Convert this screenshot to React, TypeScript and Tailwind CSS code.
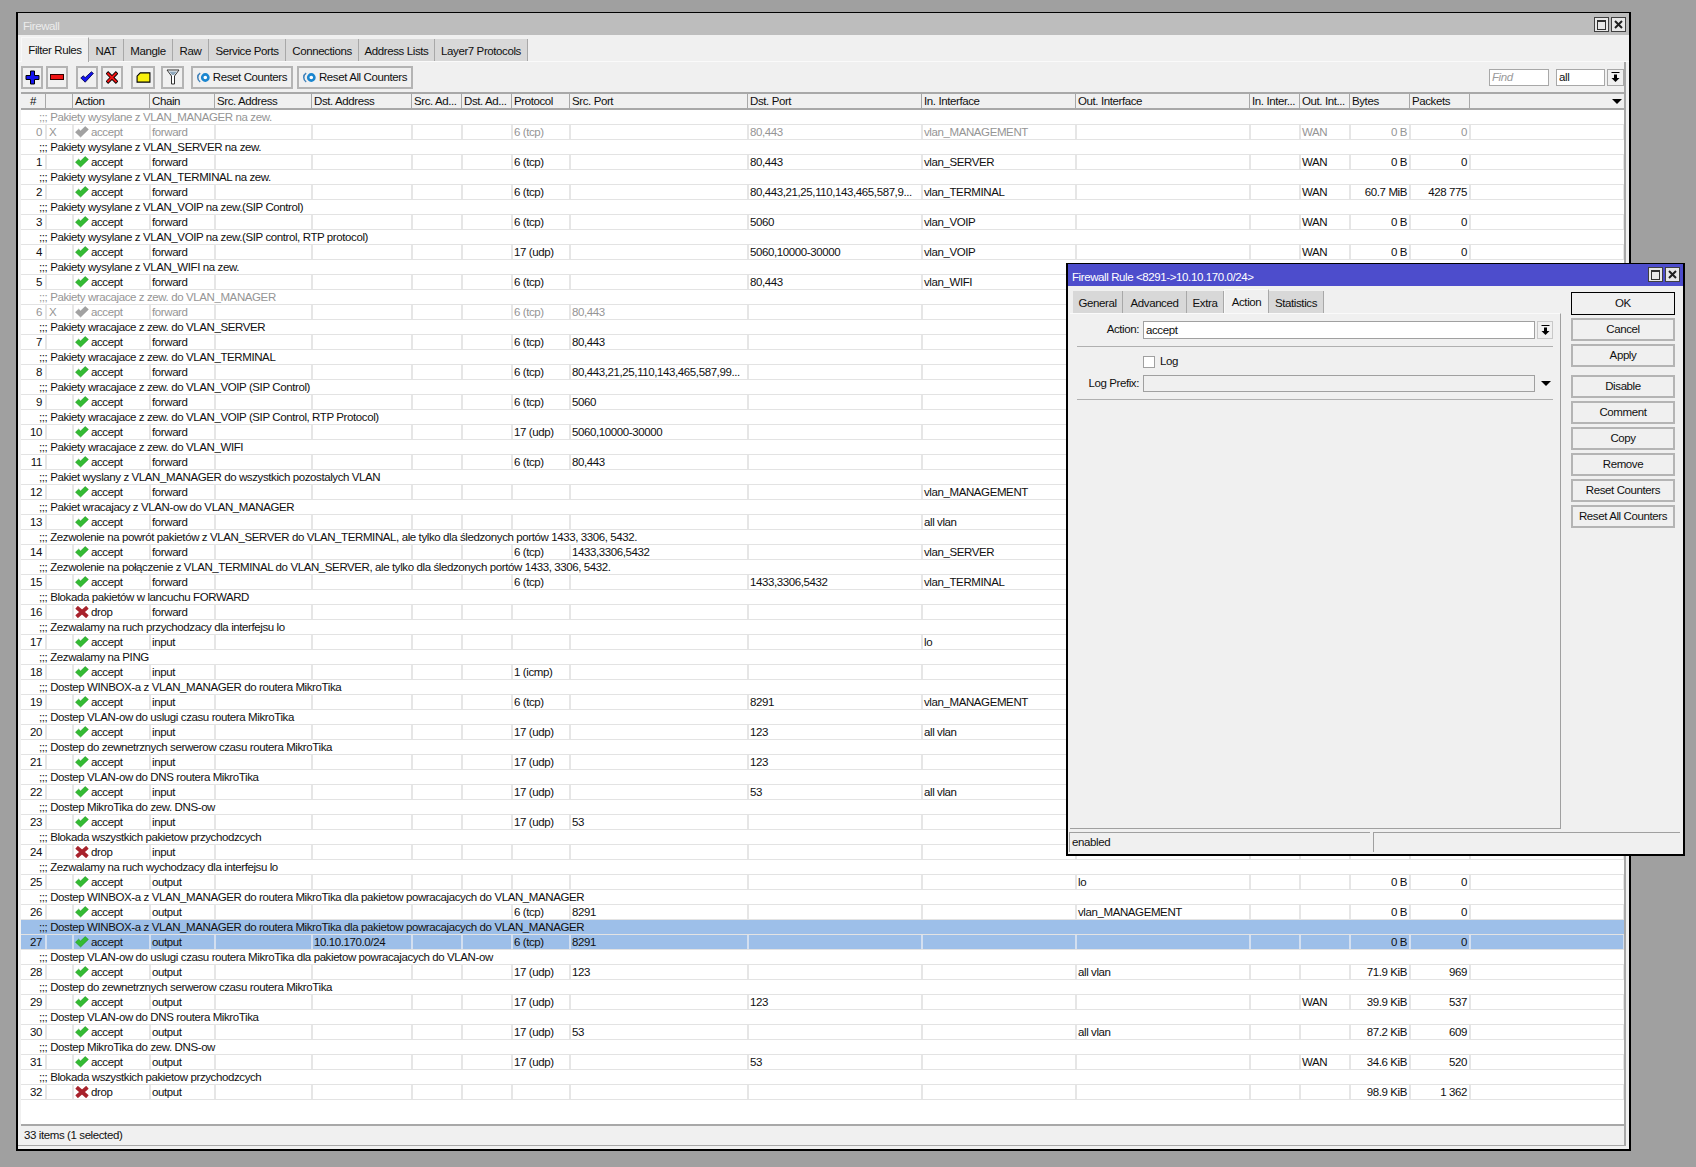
import React from "react";

type Row = {
  c: string;
  a?: "accept" | "drop";
  ch: string;
  dstA?: string;
  p?: string;
  sp?: string;
  dp?: string;
  ii?: string;
  oi?: string;
  oint?: string;
  b?: string;
  n?: string;
  off?: boolean;
  sel?: boolean;
};

const rows: Row[] = [
  { c: "Pakiety wysylane z VLAN_MANAGER na zew.", ch: "forward", p: "6 (tcp)", dp: "80,443", ii: "vlan_MANAGEMENT", oint: "WAN", b: "0 B", n: "0", off: true },
  { c: "Pakiety wysylane z VLAN_SERVER na zew.", ch: "forward", p: "6 (tcp)", dp: "80,443", ii: "vlan_SERVER", oint: "WAN", b: "0 B", n: "0" },
  { c: "Pakiety wysylane z VLAN_TERMINAL na zew.", ch: "forward", p: "6 (tcp)", dp: "80,443,21,25,110,143,465,587,9...", ii: "vlan_TERMINAL", oint: "WAN", b: "60.7 MiB", n: "428 775" },
  { c: "Pakiety wysylane z VLAN_VOIP na zew.(SIP Control)", ch: "forward", p: "6 (tcp)", dp: "5060", ii: "vlan_VOIP", oint: "WAN", b: "0 B", n: "0" },
  { c: "Pakiety wysylane z VLAN_VOIP na zew.(SIP control, RTP protocol)", ch: "forward", p: "17 (udp)", dp: "5060,10000-30000", ii: "vlan_VOIP", oint: "WAN", b: "0 B", n: "0" },
  { c: "Pakiety wysylane z VLAN_WIFI na zew.", ch: "forward", p: "6 (tcp)", dp: "80,443", ii: "vlan_WIFI" },
  { c: "Pakiety wracajace z zew. do VLAN_MANAGER", ch: "forward", p: "6 (tcp)", sp: "80,443", off: true },
  { c: "Pakiety wracajace z zew. do VLAN_SERVER", ch: "forward", p: "6 (tcp)", sp: "80,443" },
  { c: "Pakiety wracajace z zew. do VLAN_TERMINAL", ch: "forward", p: "6 (tcp)", sp: "80,443,21,25,110,143,465,587,99..." },
  { c: "Pakiety wracajace z zew. do VLAN_VOIP (SIP Control)", ch: "forward", p: "6 (tcp)", sp: "5060" },
  { c: "Pakiety wracajace z zew. do VLAN_VOIP (SIP Control, RTP Protocol)", ch: "forward", p: "17 (udp)", sp: "5060,10000-30000" },
  { c: "Pakiety wracajace z zew. do VLAN_WIFI", ch: "forward", p: "6 (tcp)", sp: "80,443" },
  { c: "Pakiet wyslany z VLAN_MANAGER do wszystkich pozostalych VLAN", ch: "forward", ii: "vlan_MANAGEMENT" },
  { c: "Pakiet wracajacy z VLAN-ow do VLAN_MANAGER", ch: "forward", ii: "all vlan" },
  { c: "Zezwolenie na powrót pakietów z VLAN_SERVER do VLAN_TERMINAL, ale tylko dla śledzonych portów 1433, 3306, 5432.", ch: "forward", p: "6 (tcp)", sp: "1433,3306,5432", ii: "vlan_SERVER" },
  { c: "Zezwolenie na połączenie z VLAN_TERMINAL do VLAN_SERVER, ale tylko dla śledzonych portów 1433, 3306, 5432.", ch: "forward", p: "6 (tcp)", dp: "1433,3306,5432", ii: "vlan_TERMINAL" },
  { c: "Blokada pakietów w lancuchu FORWARD", a: "drop", ch: "forward" },
  { c: "Zezwalamy na ruch przychodzacy dla interfejsu lo", ch: "input", ii: "lo" },
  { c: "Zezwalamy na PING", ch: "input", p: "1 (icmp)" },
  { c: "Dostep WINBOX-a z VLAN_MANAGER do routera MikroTika", ch: "input", p: "6 (tcp)", dp: "8291", ii: "vlan_MANAGEMENT" },
  { c: "Dostep VLAN-ow do uslugi czasu routera MikroTika", ch: "input", p: "17 (udp)", dp: "123", ii: "all vlan" },
  { c: "Dostep do zewnetrznych serwerow czasu routera MikroTika", ch: "input", p: "17 (udp)", dp: "123" },
  { c: "Dostep VLAN-ow do DNS routera MikroTika", ch: "input", p: "17 (udp)", dp: "53", ii: "all vlan" },
  { c: "Dostep MikroTika do zew. DNS-ow", ch: "input", p: "17 (udp)", sp: "53" },
  { c: "Blokada wszystkich pakietow przychodzcych", a: "drop", ch: "input" },
  { c: "Zezwalamy na ruch wychodzacy dla interfejsu lo", ch: "output", oi: "lo", b: "0 B", n: "0" },
  { c: "Dostep WINBOX-a z VLAN_MANAGER do routera MikroTika dla pakietow powracajacych do VLAN_MANAGER", ch: "output", p: "6 (tcp)", sp: "8291", oi: "vlan_MANAGEMENT", b: "0 B", n: "0" },
  { c: "Dostep WINBOX-a z VLAN_MANAGER do routera MikroTika dla pakietow powracajacych do VLAN_MANAGER", ch: "output", dstA: "10.10.170.0/24", p: "6 (tcp)", sp: "8291", b: "0 B", n: "0", sel: true },
  { c: "Dostep VLAN-ow do uslugi czasu routera MikroTika dla pakietow powracajacych do VLAN-ow", ch: "output", p: "17 (udp)", sp: "123", oi: "all vlan", b: "71.9 KiB", n: "969" },
  { c: "Dostep do zewnetrznych serwerow czasu routera MikroTika", ch: "output", p: "17 (udp)", dp: "123", oint: "WAN", b: "39.9 KiB", n: "537" },
  { c: "Dostep VLAN-ow do DNS routera MikroTika", ch: "output", p: "17 (udp)", sp: "53", oi: "all vlan", b: "87.2 KiB", n: "609" },
  { c: "Dostep MikroTika do zew. DNS-ow", ch: "output", p: "17 (udp)", dp: "53", oint: "WAN", b: "34.6 KiB", n: "520" },
  { c: "Blokada wszystkich pakietow przychodzcych", a: "drop", ch: "output", b: "98.9 KiB", n: "1 362" },
];

const GRID = "grid grid-cols-[25px_27px_77px_65px_97px_100px_50px_50px_58px_178px_174px_154px_174px_50px_50px_60px_60px_154px]";

const Check = ({ off }: { off?: boolean }) => (
  <svg width="14" height="12" viewBox="0 0 14 12" className="shrink-0">
    <path d="M0.5 6.2 L3.6 3.2 L5.6 5 L10.2 0.6 L13.4 3.4 L5.6 11 Z" fill={off ? "#a2a2a2" : "#33bb33"} stroke={off ? "#949494" : "#1f9a1f"} strokeWidth="0.6" strokeLinejoin="round" />
  </svg>
);

const Cross = () => (
  <svg width="14" height="12" viewBox="0 0 14 12" className="shrink-0">
    <path d="M3 2.5 L11 9.5 M11 2.5 L3 9.5" stroke="#a8222c" strokeWidth="3.8" strokeLinecap="square" />
  </svg>
);

const ResetIcon = () => (
  <svg width="13" height="11" viewBox="0 0 13 11" className="shrink-0">
    <path d="M3.2 1.2 A5 5 0 0 0 3.2 9.8" fill="none" stroke="#3d7fb8" strokeWidth="1.5" />
    <circle cx="8.3" cy="5.5" r="3.1" fill="#fff" stroke="#1b86cf" strokeWidth="2.6" />
  </svg>
);

const Cell = ({ children, right, sel }: { children?: React.ReactNode; right?: boolean; sel?: boolean }) => (
  <div className={`overflow-hidden whitespace-nowrap h-[14px] leading-[14px] pl-[1px] pr-[2px] border-r-2 ${sel ? "border-[#d3dff0]" : "border-[#e6e6e6]"} ${right ? "text-right" : ""}`}>
    {children}
  </div>
);

const RuleRows = ({ r, i }: { r: Row; i: number }) => {
  const s = r.sel;
  const bg = s ? "bg-[#9dbfe9]" : "bg-white";
  const text = r.off ? "text-[#959595]" : "text-[#101010]";
  return (
    <>
      <div className={`h-[15px] leading-[14px] pl-[18px] whitespace-nowrap border-b border-[#e3e3e3] ${bg} ${text}`}>
        ;;; {r.c}
      </div>
      <div className={`h-[15px] pl-[1px] border-b border-[#e3e3e3] ${bg} ${text}`}>
        <div className={GRID}>
          <Cell right sel={s}>
            <span className="pr-[1px]">{i}</span>
          </Cell>
          <Cell sel={s}>{r.off ? <span className="pl-[1px]">X</span> : ""}</Cell>
          <Cell sel={s}>
            <span className="flex items-center gap-[2px] h-full">
              {r.a === "drop" ? <Cross /> : <Check off={r.off} />}
              <span>{r.a ?? "accept"}</span>
            </span>
          </Cell>
          <Cell sel={s}>{r.ch}</Cell>
          <Cell sel={s} />
          <Cell sel={s}>{r.dstA}</Cell>
          <Cell sel={s} />
          <Cell sel={s} />
          <Cell sel={s}>{r.p}</Cell>
          <Cell sel={s}>{r.sp}</Cell>
          <Cell sel={s}>{r.dp}</Cell>
          <Cell sel={s}>{r.ii}</Cell>
          <Cell sel={s}>{r.oi}</Cell>
          <Cell sel={s} />
          <Cell sel={s}>{r.oint}</Cell>
          <Cell right sel={s}>{r.b}</Cell>
          <Cell right sel={s}>{r.n}</Cell>
          <Cell sel={s} />
        </div>
      </div>
    </>
  );
};

const Tab = ({ label, w, active }: { label: string; w: string; active?: boolean }) => (
  <div
    className={`${w} flex justify-center border-r border-[#a8a8a8] ${
      active
        ? "h-[25px] bg-[#f0f0f0] border-l border-t border-l-[#f8f8f8] border-t-[#f8f8f8] -mb-px pt-[4px]"
        : "h-[22px] bg-[#d8d8d8] pt-[4px]"
    }`}
  >
    {label}
  </div>
);

const ToolBtn = ({ w = "w-[22px]", children }: { w?: string; children?: React.ReactNode }) => (
  <div className={`${w} h-[23px] border-2 border-[#b4b4b4] bg-[#f0f0f0] flex items-center justify-center gap-[3px]`}>{children}</div>
);

const WinBtns = () => (
  <div className="flex gap-[2px] items-center">
    <div className="w-[15px] h-[15px] border border-[#404040] bg-[#e8e8e8] flex items-center justify-center">
      <div className="w-[9px] h-[10px] border border-[#303030] border-t-2" />
    </div>
    <div className="w-[15px] h-[15px] border border-[#404040] bg-[#e8e8e8] flex items-center justify-center">
      <svg width="9" height="9" viewBox="0 0 9 9">
        <path d="M1 1 L8 8 M8 1 L1 8" stroke="#202020" strokeWidth="2" />
      </svg>
    </div>
  </div>
);

const DropGlyph = () => (
  <svg width="9" height="11" viewBox="0 0 9 11">
    <path d="M0.5 0.5 H8.5" stroke="#000" strokeWidth="1" />
    <path d="M3 2.5 H6 V6 H8.5 L4.5 10 L0.5 6 H3 Z" fill="#000" />
  </svg>
);

const DialogBtn = ({ label, ok, mt }: { label: string; ok?: boolean; mt?: string }) => (
  <div className={`h-[23px] ${mt ?? "mt-[3px]"} flex justify-center ${ok ? "border border-black leading-[20px]" : "border-2 border-[#b4b4b4] leading-[18px]"}`}>{label}</div>
);

export default function App() {
  return (
    <div
      className="relative w-[1696px] h-[1167px] overflow-hidden bg-[#a0a0a0] pl-[16px] pt-[12px] text-[11.5px] tracking-[-0.4px] text-[#101010]"
      style={{ fontFamily: '"Liberation Sans", Arial, sans-serif' }}
    >
      {/* Main window */}
      <div className="w-[1615px] h-[1139px] border-2 border-t-[1px] border-black bg-[#f0f0f0] flex flex-col">
        <div className="h-[22px] shrink-0 bg-[#bdbdbd] flex justify-between pl-[5px] pr-[3px] text-[#ececec]">
          <span className="leading-[14px] pt-[6px]">Firewall</span>
          <div className="pt-[4px]">
            <WinBtns />
          </div>
        </div>
        <div className="h-[27px] shrink-0 flex items-end pl-[3px] border-b border-[#fafafa]">
          <Tab label="Filter Rules" w="w-[68px]" active />
          <Tab label="NAT" w="w-[35px]" />
          <Tab label="Mangle" w="w-[49px]" />
          <Tab label="Raw" w="w-[36px]" />
          <Tab label="Service Ports" w="w-[77px]" />
          <Tab label="Connections" w="w-[73px]" />
          <Tab label="Address Lists" w="w-[76px]" />
          <Tab label="Layer7 Protocols" w="w-[93px]" />
        </div>
        <div className="flex-1 min-h-0 flex flex-col pl-[3px] mr-[3px] mb-[3px] border-r-2 border-b border-[#a8a8a8]">
          <div className="h-[30px] shrink-0 flex items-center">
            <ToolBtn>
              <svg width="15" height="15" viewBox="0 0 15 15">
                <path d="M5.5 1 H9.5 V5.5 H14 V9.5 H9.5 V14 H5.5 V9.5 H1 V5.5 H5.5 Z" fill="#1414f0" stroke="#000" strokeWidth="1" />
              </svg>
            </ToolBtn>
            <div className="w-[3px]" />
            <ToolBtn>
              <svg width="14" height="6" viewBox="0 0 14 6">
                <rect x="0.5" y="0.5" width="13" height="5" fill="#f01414" stroke="#300000" strokeWidth="1" />
              </svg>
            </ToolBtn>
            <div className="w-[8px]" />
            <ToolBtn>
              <svg width="14" height="12" viewBox="0 0 14 12">
                <path d="M0.8 7 L3.2 4.8 L5.2 6.6 L11.4 0.8 L13.4 2.4 L5.2 11.2 Z" fill="#1414f0" stroke="#000040" strokeWidth="0.8" />
              </svg>
            </ToolBtn>
            <div className="w-[3px]" />
            <ToolBtn>
              <svg width="12" height="13" viewBox="0 0 14 14">
                <path d="M2.5 2.5 L11.5 11.5 M11.5 2.5 L2.5 11.5" stroke="#000" strokeWidth="4.2" strokeLinecap="square" />
                <path d="M2.5 2.5 L11.5 11.5 M11.5 2.5 L2.5 11.5" stroke="#f01414" strokeWidth="2.4" strokeLinecap="square" />
              </svg>
            </ToolBtn>
            <div className="w-[8px]" />
            <ToolBtn w="w-[24px]">
              <svg width="15" height="11" viewBox="0 0 16 12">
                <path d="M1 4.5 L4.5 1 H15 V11 H1 Z" fill="#f8f00c" stroke="#000" strokeWidth="1.2" />
              </svg>
            </ToolBtn>
            <div className="w-[6px]" />
            <ToolBtn w="w-[23px]">
              <svg width="14" height="16" viewBox="0 0 14 16">
                <path d="M1 1 H13 L8.5 7 V15 H5.5 V7 Z" fill="#fff" stroke="#303030" strokeWidth="1" />
                <path d="M3 2.5 H11 L8 6 H6 Z" fill="#8fa8bc" />
              </svg>
            </ToolBtn>
            <div className="w-[7px]" />
            <ToolBtn w="w-[102px]">
              <ResetIcon />
              <span className="pt-[1px]">Reset Counters</span>
            </ToolBtn>
            <div className="w-[4px]" />
            <ToolBtn w="w-[116px]">
              <ResetIcon />
              <span className="pt-[1px]">Reset All Counters</span>
            </ToolBtn>
            <div className="ml-auto flex items-center">
              <div className="w-[60px] h-[17px] border border-[#a8a8a8] bg-white italic text-[#9a9a9a] pl-[2px] leading-[15px]">Find</div>
              <div className="w-[7px]" />
              <div className="w-[49px] h-[17px] border border-[#a8a8a8] bg-white pl-[2px] leading-[15px]">all</div>
              <div className="w-[2px]" />
              <div className="w-[17px] h-[17px] border border-[#a8a8a8] flex items-center justify-center">
                <DropGlyph />
              </div>
            </div>
          </div>
          {/* Header */}
          <div className={`${GRID} h-[18px] shrink-0 border-t-2 border-b-2 border-[#a8a8a8] bg-[#f0f0f0]`}>
            {["#", "", "Action", "Chain", "Src. Address", "Dst. Address", "Src. Ad...", "Dst. Ad...", "Protocol", "Src. Port", "Dst. Port", "In. Interface", "Out. Interface", "In. Inter...", "Out. Int...", "Bytes", "Packets"].map((h, i) => (
              <div key={i} className={`h-[14px] leading-[15px] whitespace-nowrap overflow-hidden border-r border-[#a8a8a8] ${i === 0 ? "pl-[9px]" : "pl-[2px]"}`}>
                {h}
              </div>
            ))}
            <div className="flex justify-end items-center pr-[2px] h-[14px]">
              <div className="w-0 h-0 border-l-[5px] border-r-[5px] border-t-[5px] border-l-transparent border-r-transparent border-t-black" />
            </div>
          </div>
          {/* Rows */}
          <div className="flex-1 min-h-0 bg-white overflow-hidden">
            {rows.map((r, i) => (
              <RuleRows key={i} r={r} i={i} />
            ))}
          </div>
          <div className="h-[21px] shrink-0 border-t-2 border-[#a8a8a8] leading-[18px] pl-[3px]">33 items (1 selected)</div>
        </div>
      </div>

      {/* Dialog window */}
      <div className="absolute left-[1066px] top-[263px] w-[619px] h-[593px] border-2 border-black border-t-[1px] bg-[#f0f0f0] flex flex-col">
        <div className="h-[22px] shrink-0 bg-[#4d4dcc] text-white flex justify-between pl-[4px] pr-[3px]">
          <span className="leading-[14px] pt-[6px]">Firewall Rule &lt;8291-&gt;10.10.170.0/24&gt;</span>
          <div className="pt-[3px]">
            <WinBtns />
          </div>
        </div>
        <div className="flex-1 min-h-0 flex">
          <div className="w-[493px] shrink-0 flex flex-col pl-[2px]">
            <div className="h-[27px] shrink-0 flex items-end pl-[3px]">
              <Tab label="General" w="w-[50px]" />
              <Tab label="Advanced" w="w-[64px]" />
              <Tab label="Extra" w="w-[37px]" />
              <Tab label="Action" w="w-[45px]" active />
              <Tab label="Statistics" w="w-[55px]" />
            </div>
            <div className="h-[516px] border-r border-b border-[#a0a0a0] border-t border-t-[#fafafa] pl-[7px] pr-[7px] pt-[7px]">
              <div className="flex items-center h-[18px]">
                <div className="w-[62px] text-right">Action:</div>
                <div className="ml-[4px] w-[392px] h-[18px] border border-[#a0a0a0] bg-white pl-[2px] leading-[16px]">accept</div>
                <div className="ml-[2px] w-[16px] h-[18px] border border-[#c8c8c8] flex items-center justify-center">
                  <DropGlyph />
                </div>
              </div>
              <div className="h-px bg-[#b0b0b0] mt-[7px]" />
              <div className="flex items-center h-[14px] mt-[8px]">
                <div className="ml-[66px] w-[12px] h-[12px] border border-[#a0a0a0] bg-white" />
                <span className="ml-[5px]">Log</span>
              </div>
              <div className="flex items-center h-[17px] mt-[6px]">
                <div className="w-[62px] text-right whitespace-nowrap">Log Prefix:</div>
                <div className="ml-[4px] w-[392px] h-[17px] border border-[#a0a0a0]" />
                <div className="ml-[6px] w-0 h-0 border-l-[5px] border-r-[5px] border-t-[5px] border-l-transparent border-r-transparent border-t-black" />
              </div>
              <div className="h-px bg-[#b0b0b0] mt-[7px]" />
            </div>
            <div className="h-[21px] shrink-0" />
          </div>
          <div className="w-[124px] pl-[10px] pr-[8px] pt-[6px]">
            <DialogBtn label="OK" mt="mt-0" ok />
            <DialogBtn label="Cancel" />
            <DialogBtn label="Apply" />
            <DialogBtn label="Disable" mt="mt-[8px]" />
            <DialogBtn label="Comment" />
            <DialogBtn label="Copy" />
            <DialogBtn label="Remove" />
            <DialogBtn label="Reset Counters" />
            <DialogBtn label="Reset All Counters" />
          </div>
        </div>
        <div className="absolute left-[1px] right-[3px] bottom-[2px] h-[20px] flex gap-[3px]">
          <div className="w-[301px] border-t border-l border-[#a0a0a0] leading-[18px] pl-[2px]">enabled</div>
          <div className="flex-1 border-t border-l border-[#a0a0a0]" />
        </div>
      </div>
    </div>
  );
}
